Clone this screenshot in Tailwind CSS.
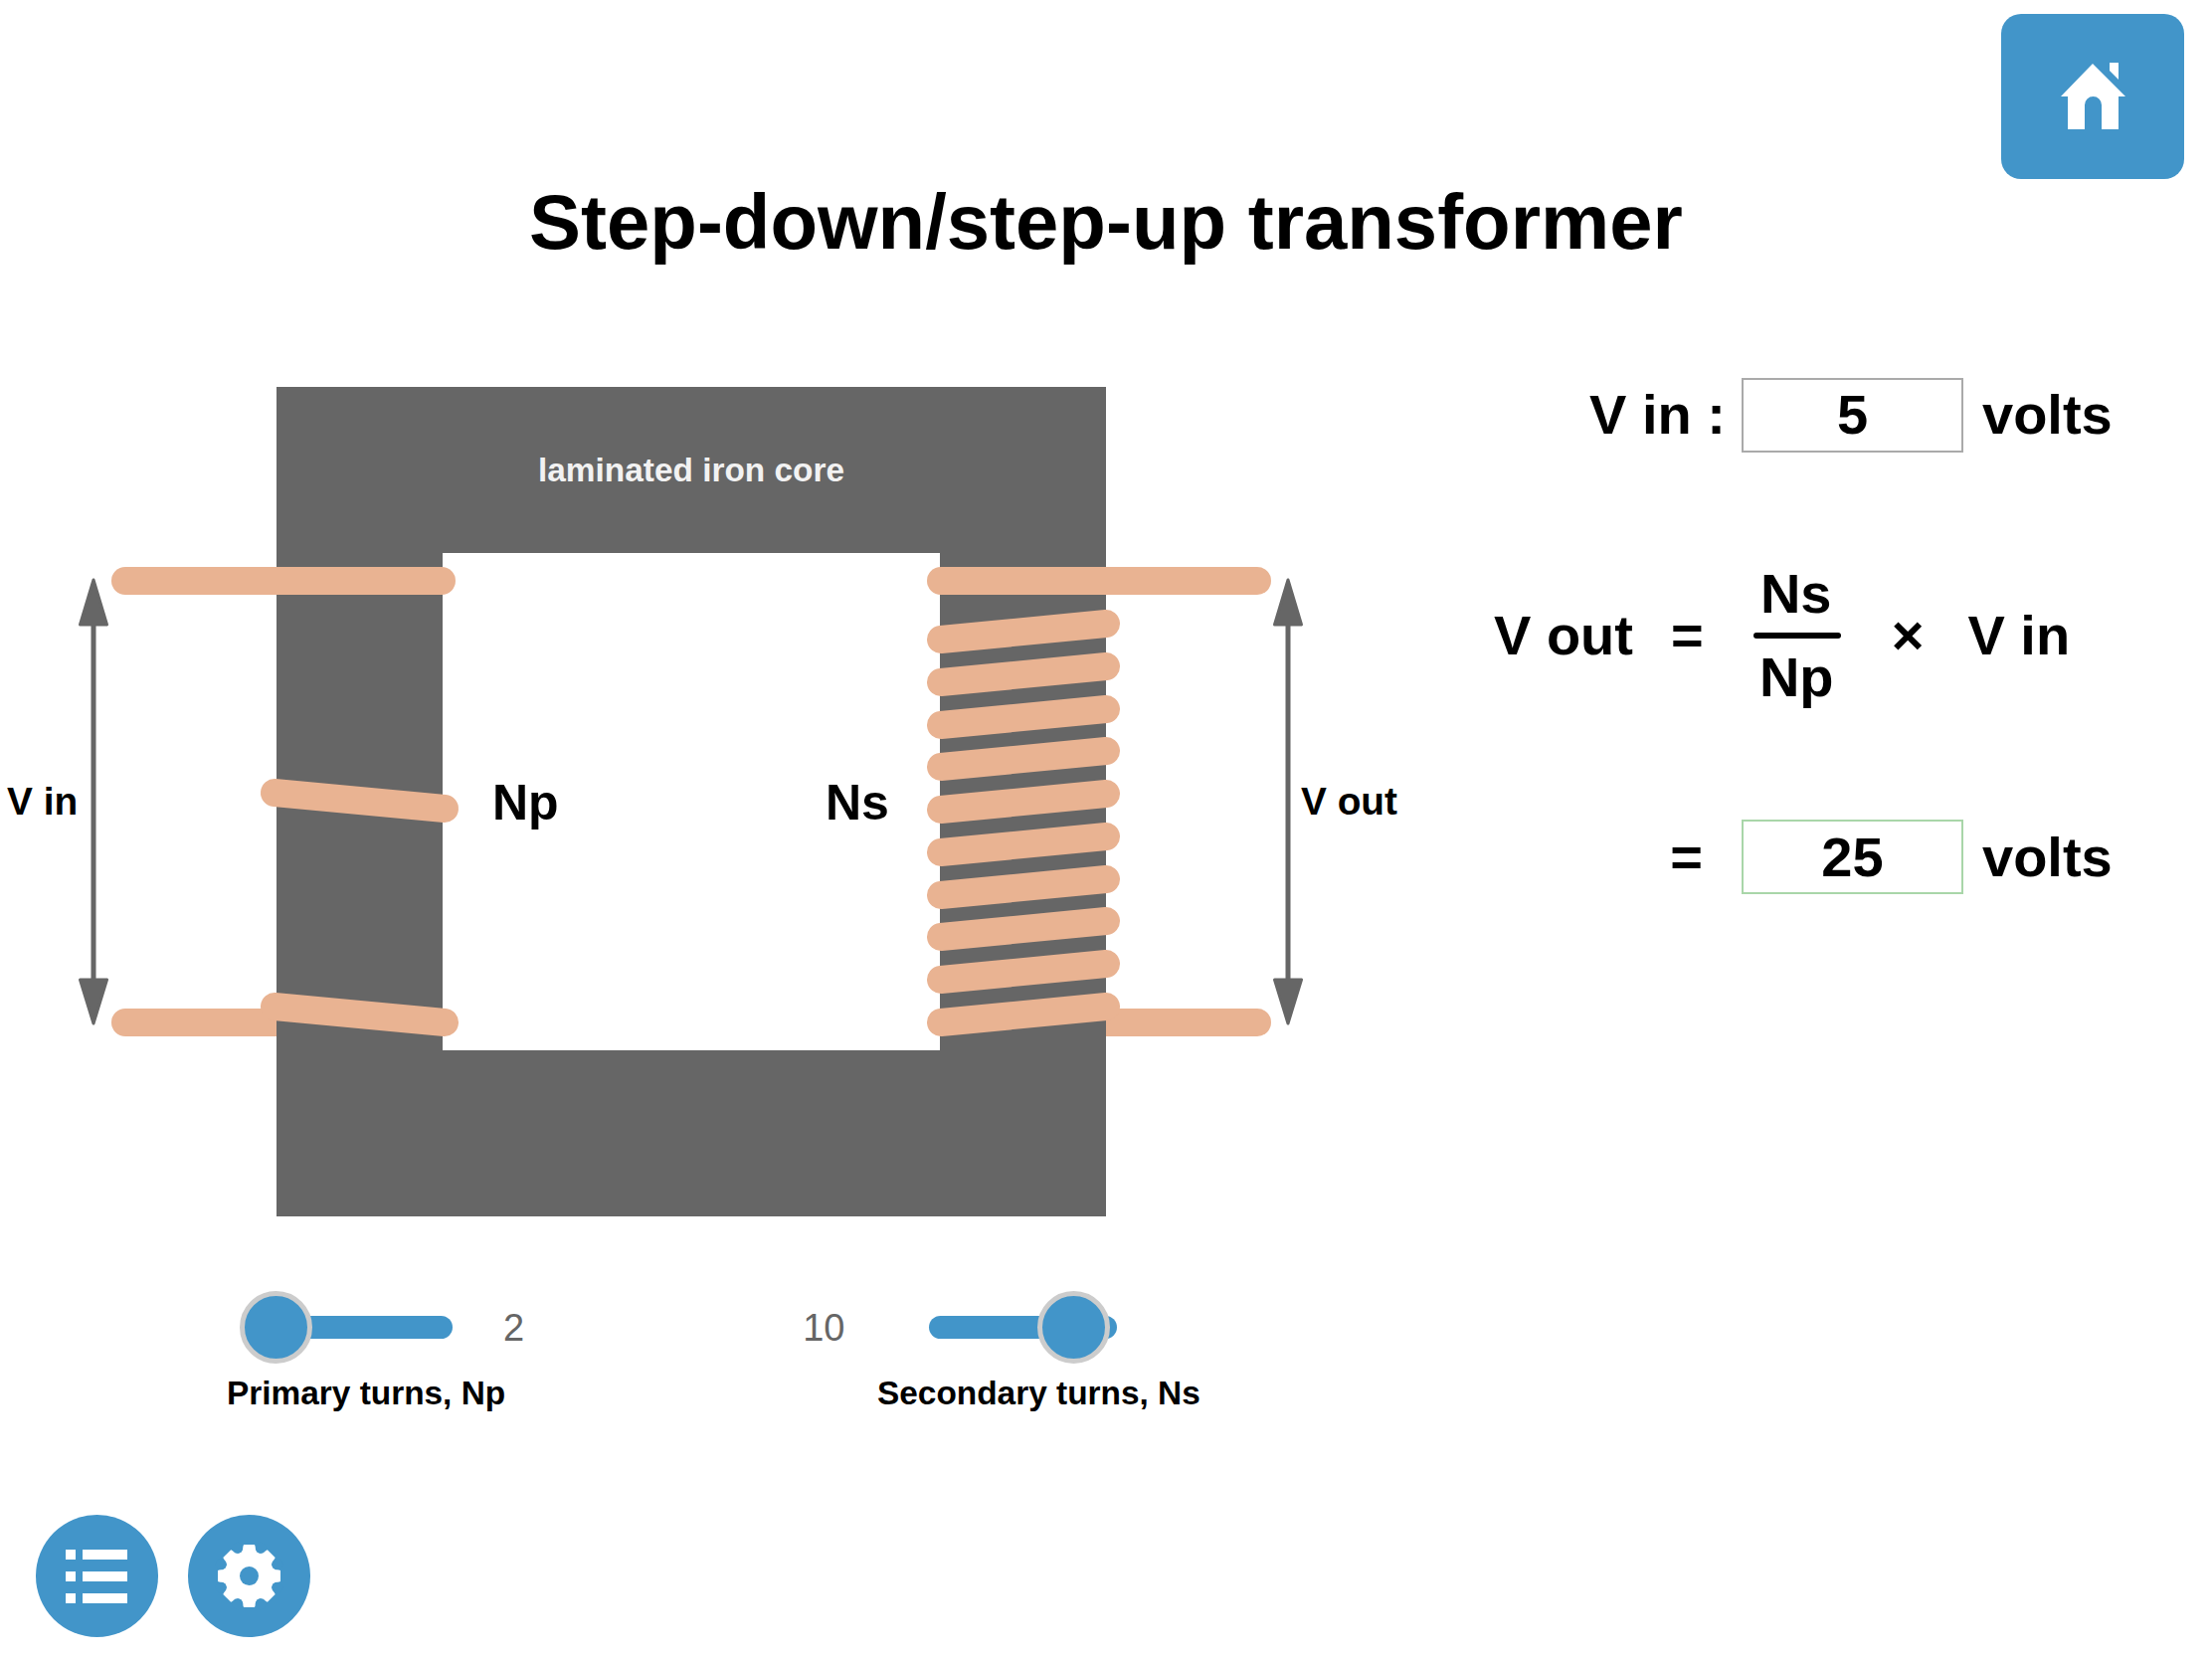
<!DOCTYPE html>
<html lang="en">
<head>
  <meta charset="UTF-8" />
  <title>Step-down/step-up transformer</title>
  <script src="https://cdn.jsdelivr.net/npm/@tailwindcss/browser@4"></script>
</head>
<body class="bg-white text-black font-['Liberation_Sans',Arial,sans-serif]">
  <div class="w-[2224px] h-[1668px] overflow-hidden">

    <!-- Home button -->
    <div class="flex justify-end pt-[14px] pr-[28px]">
      <button class="w-[184px] h-[166px] rounded-[20px] bg-[#4295c9]">
        <svg class="block" width="184" height="166" viewBox="0 0 184 166">
          <path fill="#fff" d="M92 50 L125 83 H118 V116 H101 V91.5 a8.5 8.5 0 0 0 -17 0 V116 H67 V83 H60 Z" />
          <path fill="#fff" d="M109 49 H118 V66 L109 57 Z" />
        </svg>
      </button>
    </div>

    <h1 class="h-[86px] text-center text-[77.9px] leading-[86px] font-bold">Step-down/step-up transformer</h1>

    <div class="flex items-start mt-[114px]">
      <!-- Transformer diagram and sliders -->
      <div class="w-[1480px] shrink-0">
        <svg class="block" width="1420" height="860" viewBox="0 380 1420 860">
          <g stroke="#e9b392" stroke-width="28" stroke-linecap="round" fill="none">
            <path d="M126 1028 H300" />
            <path d="M1090 1028 H1264" />
          </g>
          <path fill="#666" fill-rule="evenodd" d="M278 389 H1112 V1223 H278 Z M445 556 V1056 H945 V556 Z" />
          <g stroke="#e9b392" stroke-width="28" stroke-linecap="round" fill="none">
            <path d="M126 584 H444" />
            <path d="M946 584 H1264" />
            <path d="M276 797 L447 813" />
            <path d="M276 1012 L447 1028" />
            <path d="M946 643 L1112 627" />
            <path d="M946 686 L1112 670" />
            <path d="M946 729 L1112 713" />
            <path d="M946 771 L1112 755" />
            <path d="M946 814 L1112 798" />
            <path d="M946 857 L1112 841" />
            <path d="M946 900 L1112 884" />
            <path d="M946 942 L1112 926" />
            <path d="M946 985 L1112 969" />
            <path d="M946 1028 L1112 1012" />
          </g>
          <g fill="#666" stroke="#666" stroke-width="3" stroke-linejoin="round">
            <path d="M94 583 L107.5 628 H80.5 Z" />
            <path d="M94 1029 L107.5 985 H80.5 Z" />
            <path d="M1295 583 L1308.5 628 H1281.5 Z" />
            <path d="M1295 1029 L1308.5 985 H1281.5 Z" />
          </g>
          <path stroke="#666" stroke-width="5" d="M94 620 V995 M1295 620 V995" />
          <g font-weight="700">
            <text x="695" y="484" text-anchor="middle" font-size="33.4" fill="#f2f2f2">laminated iron core</text>
            <text x="495" y="824" font-size="50" fill="#000">Np</text>
            <text x="830" y="824" font-size="50" fill="#000">Ns</text>
            <text x="7" y="819" font-size="38.8" fill="#000">V in</text>
            <text x="1308" y="819" font-size="38.8" fill="#000">V out</text>
          </g>
        </svg>

        <div class="flex items-center h-[72px] mt-[58px] ml-[265px]">
          <div class="relative w-[190px] h-[23px] rounded-full bg-[#4295c9]">
            <div class="absolute left-[-24px] top-[-25px] w-[73px] h-[73px] rounded-full bg-[#4295c9] border-[5px] border-[#ccc]"></div>
          </div>
          <span class="ml-[51px] pt-[2px] text-[38px] text-[#666]">2</span>
          <span class="ml-[280px] pt-[2px] text-[38px] text-[#666]">10</span>
          <div class="relative ml-[85px] w-[189px] h-[23px] rounded-full bg-[#4295c9]">
            <div class="absolute left-[109px] top-[-25px] w-[73px] h-[73px] rounded-full bg-[#4295c9] border-[5px] border-[#ccc]"></div>
          </div>
        </div>
        <div class="flex mt-[11px] ml-[228px] text-[33.4px] leading-[40px] font-bold">
          <span class="w-[654px] shrink-0">Primary turns, Np</span>
          <span>Secondary turns, Ns</span>
        </div>
      </div>

      <!-- Formula panel -->
      <div class="flex flex-col gap-[110px] text-[56px] font-bold">
        <div class="flex items-center h-[75px]">
          <span class="w-[255px] pb-[2px] text-right">V in :</span>
          <div class="ml-[16px] w-[223px] h-[75px] pb-[2px] border-2 border-[#aaa] flex items-center justify-center">5</div>
          <span class="ml-[19px] pb-[2px]">volts</span>
        </div>
        <div class="flex items-center h-[149px] pb-[1px] ml-[22px]">
          <span class="w-[178px]">V out</span>
          <span>=</span>
          <div class="ml-[50px] w-[88px] flex flex-col items-center leading-[64px]">
            <span class="-ml-[2px]">Ns</span>
            <div class="w-[88px] h-[6px] mt-[7px] mb-[7px] rounded-full bg-black"></div>
            <span class="-ml-[1px]">Np</span>
          </div>
          <span class="ml-[51px]">×</span>
          <span class="ml-[44px]">V in</span>
        </div>
        <div class="flex items-center h-[75px]">
          <span class="w-[254px] pr-[22px] text-right">=</span>
          <div class="ml-[17px] w-[223px] h-[75px] border-2 border-[#a9d6a9] flex items-center justify-center">25</div>
          <span class="ml-[19px]">volts</span>
        </div>
      </div>
    </div>

    <!-- Menu and settings buttons -->
    <div class="flex gap-[30px] pl-[36px] mt-[102px]">
      <button class="w-[123px] h-[123px] rounded-full bg-[#4295c9]">
        <svg class="block" width="123" height="123" viewBox="0 0 123 123" fill="#fff">
          <rect x="30" y="35" width="10" height="10" />
          <rect x="47" y="35" width="45" height="10" />
          <rect x="30" y="57" width="10" height="10" />
          <rect x="47" y="57" width="45" height="10" />
          <rect x="30" y="79" width="10" height="10" />
          <rect x="47" y="79" width="45" height="10" />
        </svg>
      </button>
      <button class="w-[123px] h-[123px] rounded-full bg-[#4295c9]">
        <svg class="block" width="123" height="123" viewBox="-61.5 -61.5 123 123">
          <circle r="25.5" fill="#fff" />
          <g fill="#fff">
            <path d="M-5.5 -31.5 H5.5 L8 -24 H-8 Z" />
            <path d="M-5.5 -31.5 H5.5 L8 -24 H-8 Z" transform="rotate(45)" />
            <path d="M-5.5 -31.5 H5.5 L8 -24 H-8 Z" transform="rotate(90)" />
            <path d="M-5.5 -31.5 H5.5 L8 -24 H-8 Z" transform="rotate(135)" />
            <path d="M-5.5 -31.5 H5.5 L8 -24 H-8 Z" transform="rotate(180)" />
            <path d="M-5.5 -31.5 H5.5 L8 -24 H-8 Z" transform="rotate(225)" />
            <path d="M-5.5 -31.5 H5.5 L8 -24 H-8 Z" transform="rotate(270)" />
            <path d="M-5.5 -31.5 H5.5 L8 -24 H-8 Z" transform="rotate(315)" />
          </g>
          <g fill="#4295c9">
            <circle cy="-30.5" r="5.5" transform="rotate(22.5)" />
            <circle cy="-30.5" r="5.5" transform="rotate(67.5)" />
            <circle cy="-30.5" r="5.5" transform="rotate(112.5)" />
            <circle cy="-30.5" r="5.5" transform="rotate(157.5)" />
            <circle cy="-30.5" r="5.5" transform="rotate(202.5)" />
            <circle cy="-30.5" r="5.5" transform="rotate(247.5)" />
            <circle cy="-30.5" r="5.5" transform="rotate(292.5)" />
            <circle cy="-30.5" r="5.5" transform="rotate(337.5)" />
            <circle r="9.5" />
          </g>
        </svg>
      </button>
    </div>
  </div>
</body>
</html>
